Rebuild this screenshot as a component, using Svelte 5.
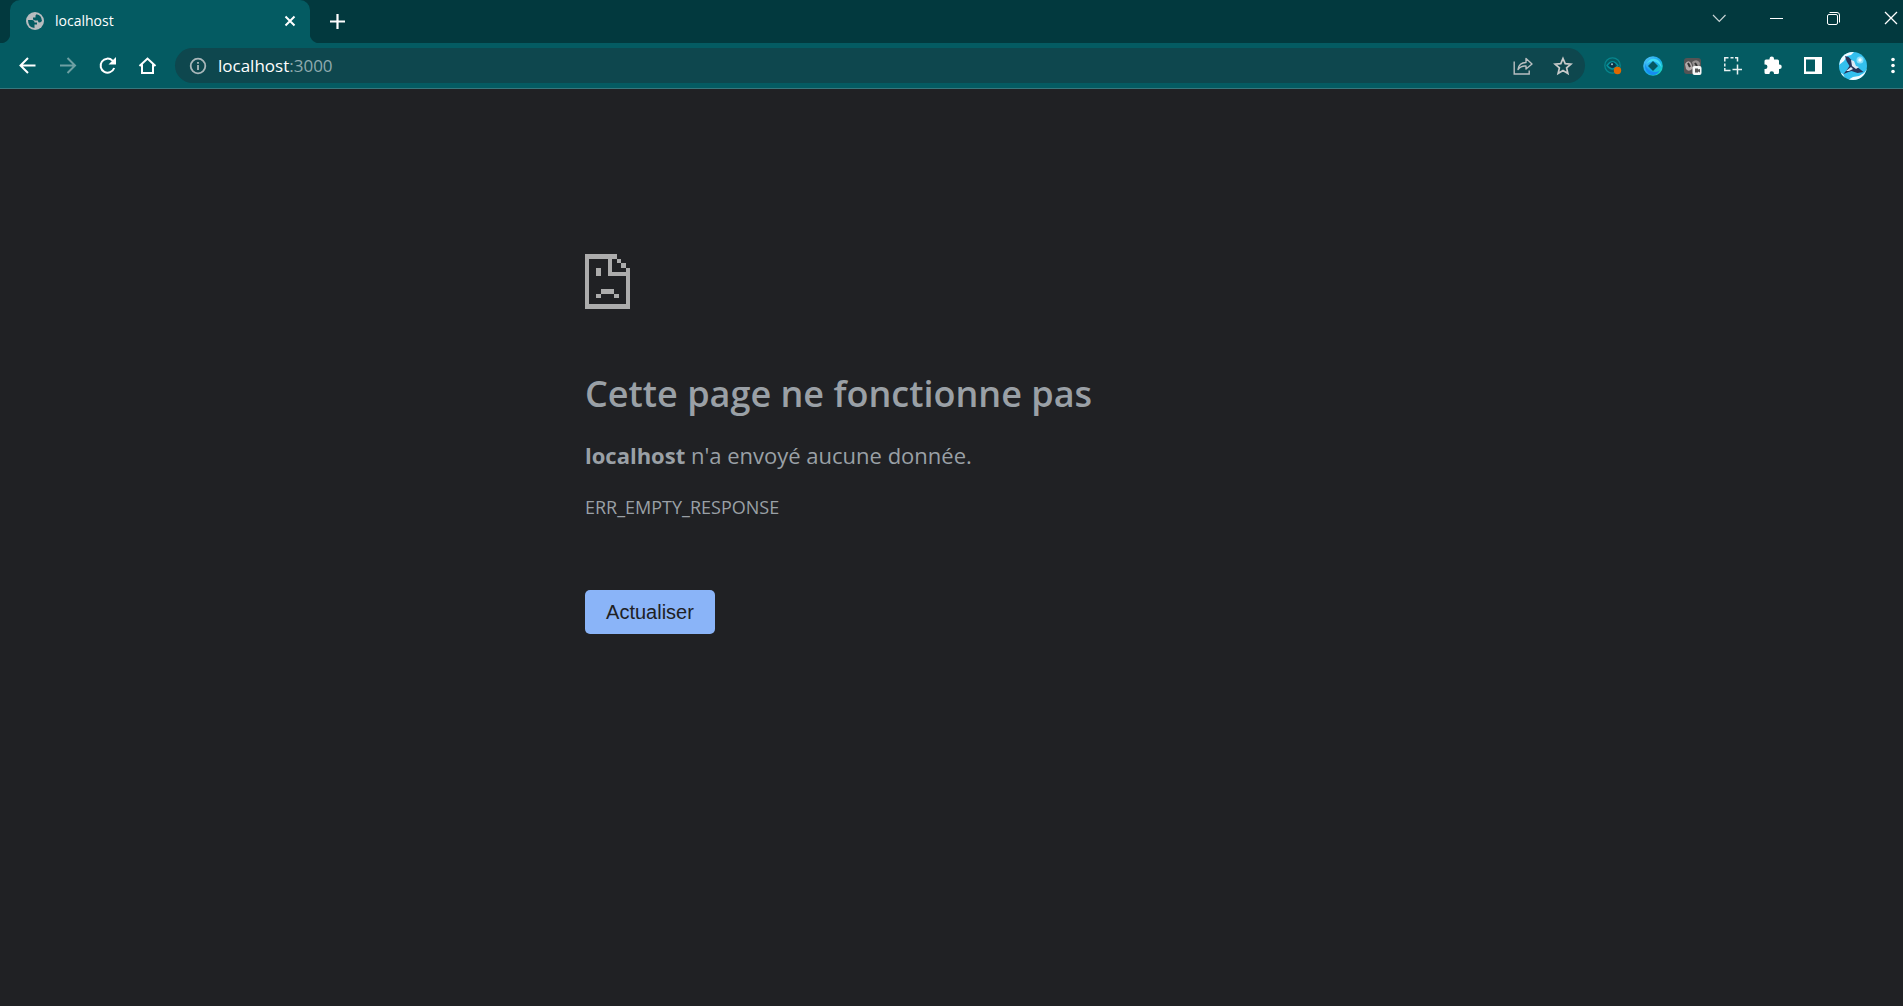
<script>
  let address = $state('localhost:3000');
</script>

<div class="browser">
  <header class="tabstrip">
    <div class="tab">
      <svg class="favicon" width="20" height="20" viewBox="0 0 20 20" aria-hidden="true">
        <circle cx="10" cy="10" r="9" fill="#b8bcbf" />
        <path d="M3 9h4q2.500 0 2.500 2.500h2.500v2H9.500V17Q3 16.500 3 9ZM11.500 3.200Q16.500 4 17 10q-1.500 1.500-3 1.500-1 0-1-2h-3l-2-1V6.500h2.500V4.500Z" fill="#045b62" />
      </svg>
      <span class="tab-title">localhost</span>
      <button class="tab-close" aria-label="Fermer l'onglet">
        <svg width="14" height="14" viewBox="0 0 14 14"><path d="M2.500 2.500l9 9M11.500 2.500l-9 9" stroke="#fff" stroke-width="2" /></svg>
      </button>
    </div>
    <button class="new-tab" aria-label="Nouvel onglet">
      <svg width="18" height="18" viewBox="0 0 18 18"><path d="M8.500 1v15M1 8.500h15" stroke="#fff" stroke-width="2.200" /></svg>
    </button>
    <div class="window-controls">
      <button aria-label="Rechercher des onglets">
        <svg width="20" height="20" viewBox="0 0 20 20"><path d="M4 7l6.300 6.500L16.500 7" fill="none" stroke="#c7d3d4" stroke-width="1.200" /></svg>
      </button>
      <button aria-label="Réduire">
        <svg width="20" height="20" viewBox="0 0 20 20"><path d="M4 10.500h13" stroke="#fff" /></svg>
      </button>
      <button aria-label="Restaurer">
        <svg width="20" height="20" viewBox="0 0 20 20"><g fill="none" stroke="#fff"><rect x="4.500" y="6.500" width="10" height="10" rx="1.500" /><path d="M6.500 4.500h7.500q2.500 0 2.500 2.500v7.500" /></g></svg>
      </button>
      <button class="edge" aria-label="Fermer">
        <svg width="20" height="20" viewBox="0 0 20 20"><path d="M4 4l12 12M16 4L4 16" stroke="#fff" stroke-width="1.300" /></svg>
      </button>
    </div>
  </header>

  <nav class="toolbar" aria-label="Navigation">
    <button aria-label="Retour">
      <svg width="20" height="20" viewBox="0 0 20 20"><path d="M17.500 9.500H3M10 2L2.500 9.500 10 17" fill="none" stroke="#fff" stroke-width="2" /></svg>
    </button>
    <button aria-label="Avancer" disabled>
      <svg width="20" height="20" viewBox="0 0 20 20"><path d="M2 9.500h14.500M9.500 2L17 9.500 9.500 17" fill="none" stroke="#6ea0a3" stroke-width="2" /></svg>
    </button>
    <button aria-label="Actualiser la page">
      <svg width="20" height="20" viewBox="0 0 20 20"><path d="M16.200 12A7 7 0 1 1 14.500 4.600L16.500 6.500" fill="none" stroke="#fff" stroke-width="2" /><path d="M18 1v7.500h-7.500Z" fill="#fff" /></svg>
    </button>
    <button aria-label="Accueil">
      <svg width="20" height="20" viewBox="0 0 20 20"><path d="M1.500 10L9.500 2.500l8 7.500M4 8.500V17h11V8.500" fill="none" stroke="#fff" stroke-width="2" /></svg>
    </button>

    <div class="omnibox">
      <button class="info" aria-label="Informations sur le site">
        <svg width="18" height="18" viewBox="0 0 18 18"><circle cx="9" cy="9" r="7.300" fill="none" stroke="#a9b7ba" stroke-width="1.800" /><path d="M9 8v5M9 5v1.800" stroke="#a9b7ba" stroke-width="1.800" /></svg>
      </button>
      <div class="address">
        <input aria-label="Adresse" bind:value={address} />
        <span class="address-text" aria-hidden="true">{address.split(':')[0]}<i>:{address.split(':')[1] ?? ''}</i></span>
      </div>
      <button aria-label="Partager">
        <svg width="20" height="20" viewBox="0 0 20 20"><g fill="none" stroke="#b9bfc1" stroke-width="1.400"><path d="M1.200 5.500V18h15v-3.500" /><path d="M5 13.500q1-7 8-7V2.500l6 5.500-6 5v-3Q8 9.500 5 13.500Z" stroke-linejoin="round" /></g></svg>
      </button>
      <button aria-label="Ajouter aux favoris">
        <svg width="20" height="20" viewBox="0 0 20 20"><path d="M10 2.500l2.200 5.200 5.700.5-4.300 3.700 1.300 5.600-4.900-3-4.900 3 1.300-5.600L2.100 8.200l5.700-.5Z" fill="none" stroke="#c8caca" stroke-width="1.700" /></svg>
      </button>
    </div>

    <div class="extensions">
      <button aria-label="Extension œil">
        <svg width="20" height="20" viewBox="0 0 20 20"><circle cx="9.500" cy="9.500" r="7.700" fill="none" stroke="#07858d" stroke-width="1.300" /><path d="M4 9.500q5.500-7.500 11 0-5.500 7-11 0Z" fill="#054a55" stroke="#07909a" stroke-width="1.300" /><circle cx="9.500" cy="9" r="2.700" fill="#0a3448" /><circle cx="9" cy="8.300" r="1" fill="#9bc8d0" /><circle cx="14.500" cy="14.500" r="3.700" fill="#df6800" /></svg>
      </button>
      <button aria-label="Extension anneau">
        <svg width="20" height="20" viewBox="0 0 20 20">
          <defs><linearGradient id="ring" x1="0" y1="0" x2="1" y2="1"><stop offset="0" stop-color="#5cc8fa" /><stop offset=".5" stop-color="#18a8ee" /><stop offset="1" stop-color="#18e6b0" /></linearGradient></defs>
          <circle cx="10" cy="10" r="9.800" fill="url(#ring)" />
          <path d="M3.500 8Q7 1 14 3.500q4 2 4.500 8Q15 5.500 10 5.300q-4 0-6.500 2.700Z" fill="#43dcf2" />
          <path d="M2 7.500Q4 15.500 12 16q3 0 5-2-2.500 5.500-8 5Q1.500 17.500 2 7.500Z" fill="#178df0" />
          <path d="M10 5l5 5-5 5-5-5Z" fill="#055861" />
        </svg>
      </button>
      <button aria-label="Extension vidéo">
        <svg width="20" height="20" viewBox="0 0 20 20"><rect x="1" y="2" width="17" height="16" rx="3" fill="#555354" /><path d="M2 8q3-5 6-1l2 5q-4 5-7 1Z" fill="#b2aaaa" /><path d="M9 6q5-4 8 1l-1 6h-5Z" fill="#969090" /><path d="M5 7l2 4M12 7l2 3" stroke="#353535" stroke-width="2" /><rect x="9.500" y="10" width="9" height="9" rx="2" fill="#f7f7f7" /><path d="M12 12.500h3v1l2-.5v3.500l-2-1v1h-3Z" fill="#565656" /></svg>
      </button>
      <button aria-label="Capture d'écran">
        <svg width="20" height="20" viewBox="0 0 20 20"><path d="M1.800 5.500V1.800H5.500M7.500 1.800h3M12 1.800h2.500V5.500M1.800 7.500v3M1.800 12v2.500H7.500M14.500 8.500v10M9.500 13.500H19" fill="none" stroke="#e9f1f1" stroke-width="1.500" /></svg>
      </button>
      <button aria-label="Extensions">
        <svg width="20" height="20" viewBox="0 0 20 20"><path d="M1.500 5Q1.500 3.500 3 3.500H6.500V2.700a2.200 2.200 0 0 1 4.500 0V3.500H14.500q1.500 0 1.500 1.500V8.500h.5a2.200 2.200 0 0 1 0 4.500h-.5V16.500q0 1.500-1.500 1.500h-3.500V17.500a2.200 2.200 0 0 0-4.500 0v.5H3Q1.500 18 1.500 16.500v-3.500h.7a2.200 2.200 0 0 0 0-4.500H1.500Z" fill="#fff" /></svg>
      </button>
      <button aria-label="Panneau latéral">
        <svg width="20" height="20" viewBox="0 0 20 20"><path fill-rule="evenodd" d="M1 1h18v17H1ZM3 3.500v12h9v-12Z" fill="#fff" /></svg>
      </button>
      <button aria-label="Profil">
        <svg width="28" height="28" viewBox="0 0 28 28">
          <defs><clipPath id="face"><circle cx="14" cy="14" r="14" /></clipPath></defs>
          <g clip-path="url(#face)">
            <path d="M0 0h28v28H0Z" fill="#34c0ee" />
            <path d="M3 0h12l-3 3-4 1-3 5-5 4ZM28 17v11H9l5-3 6-1 5-3ZM0 20l4 2 3 6H0Z" fill="#f1fbff" />
            <circle cx="21" cy="8" r="3.500" fill="#8de0fa" />
            <circle cx="21" cy="8" r="1.700" fill="#effcff" />
            <path d="M6 4l3.500 1 3 3 2 6 5 2 5 4-6 1-6-2-3 1-5 2 4-5 2-3-3-5Z" fill="#26345a" />
            <path d="M12 8l3 1 2 5 3 1-3 2-4-3ZM7 19l5-4 2 2-4 2Z" fill="#dceaf5" />
          </g>
        </svg>
      </button>
      <button class="edge" aria-label="Menu">
        <svg width="20" height="20" viewBox="0 0 20 20"><g fill="#fff"><circle cx="10" cy="3.500" r="1.800" /><circle cx="10" cy="9.500" r="1.800" /><circle cx="10" cy="15.500" r="1.800" /></g></svg>
      </button>
    </div>
  </nav>

  <main>
    <section class="error">
      <svg class="sad-page" width="45" height="55" viewBox="45 43 135 165" shape-rendering="crispEdges" aria-hidden="true">
        <path fill="#acacac" d="M45 43h96v14H57v137h110v-85h-53V57h12v39h41V84h13v124H45ZM141 57h12v13h-12ZM153 70h14v14h-14ZM78 84h14v25H78ZM92 149h41v13H92ZM78 162h14v13H78ZM133 162h14v13h-14Z" />
      </svg>
      <h1>Cette page ne fonctionne pas</h1>
      <p class="summary"><strong>localhost</strong> n'a envoyé aucune donnée.</p>
      <p class="code">ERR_EMPTY_RESPONSE</p>
      <button class="reload">Actualiser</button>
    </section>
  </main>
</div>

<style>
  :global(body) {
    margin: 0;
    background: #202124;
  }
  .browser {
    min-height: 100vh;
    display: flex;
    flex-direction: column;
    font-family: 'Open Sans', 'Noto Sans', sans-serif;
    background: #202124;
  }
  button {
    display: flex;
    align-items: center;
    justify-content: center;
    flex: none;
    padding: 0;
    border: 0;
    background: none;
  }
  svg {
    display: block;
    flex: none;
  }
  .tabstrip {
    display: flex;
    height: 43px;
    padding-left: 10px;
    background: #02393e;
  }
  .tab {
    position: relative;
    display: flex;
    align-items: center;
    box-sizing: border-box;
    width: 300px;
    padding: 0 13px 1px 15px;
    border-radius: 10px 10px 0 0;
    background: #045b62;
    color: #fff;
  }
  .tab::before,
  .tab::after {
    content: '';
    position: absolute;
    bottom: 0;
    width: 10px;
    height: 10px;
  }
  .tab::before {
    right: 100%;
    background: radial-gradient(circle at 0 0, transparent 10px, #045b62 11px);
  }
  .tab::after {
    left: 100%;
    background: radial-gradient(circle at 100% 0, transparent 10px, #045b62 11px);
  }
  .tab-title {
    flex: 1;
    margin-left: 10px;
    font-size: 14px;
    line-height: 20px;
  }
  .new-tab {
    width: 36px;
    margin-left: 10px;
  }
  .window-controls {
    display: flex;
    height: 36px;
    margin-left: auto;
  }
  .window-controls button {
    width: 57px;
  }
  .window-controls .edge {
    width: 42px;
    justify-content: flex-end;
    padding-right: 2px;
  }
  .toolbar {
    display: flex;
    align-items: center;
    height: 45px;
    padding-left: 8px;
    border-bottom: 1px solid #37777d;
    background: #045b62;
  }
  .toolbar button {
    width: 40px;
    height: 35px;
  }
  .omnibox {
    flex: 1;
    display: flex;
    align-items: center;
    height: 35px;
    margin: 0 8px 0 7px;
    padding: 0 2px 0 3px;
    border-radius: 18px;
    background: #0e474e;
  }
  .address {
    flex: 1;
    display: grid;
    font-size: 17px;
    line-height: 24px;
  }
  .address input,
  .address-text {
    grid-area: 1 / 1;
    font: inherit;
  }
  .address input {
    min-width: 0;
    padding: 0;
    border: 0;
    outline: 0;
    background: none;
    color: transparent;
    caret-color: #fff;
  }
  .address-text {
    color: #fff;
    pointer-events: none;
  }
  .address-text i {
    color: #8fabaf;
    font-style: normal;
  }
  .extensions {
    display: flex;
  }
  .toolbar .edge {
    width: 30px;
    justify-content: flex-end;
  }
  main {
    flex: 1;
    padding: 165px 24px 24px;
    color: #9aa0a6;
  }
  .error {
    max-width: 733px;
    margin: 0 auto;
  }
  h1 {
    margin: 61px 0 0;
    font-size: 36px;
    font-weight: 550;
    line-height: 48px;
  }
  .summary {
    margin: 21px 0 0;
    font-size: 22px;
    line-height: 32px;
  }
  .code {
    margin: 24px 0 0;
    font-size: 18px;
    line-height: 24px;
  }
  .reload {
    min-width: 130px;
    height: 44px;
    margin-top: 71px;
    padding: 0 20px;
    border-radius: 5px;
    background: #8ab4f8;
    color: #202124;
    font-family: 'Liberation Sans', Arial, sans-serif;
    font-size: 20px;
  }
</style>
